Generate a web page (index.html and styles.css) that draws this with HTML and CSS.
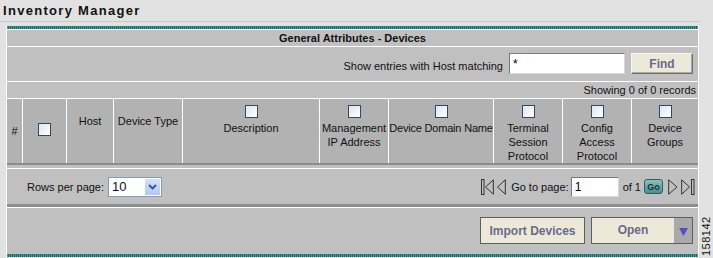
FILE: index.html
```html
<!DOCTYPE html>
<html lang="en">
<head>
    <meta charset="UTF-8">
    <title>Inventory Manager</title>
    <link rel="stylesheet" href="styles.css">
</head>
<body>
    <div class="page-title">Inventory Manager</div>

    <div class="panel">
        <div class="strip"></div>
        <div class="caption">General Attributes - Devices</div>

        <!-- Filter -->
        <div class="filter-row">
            <span>Show entries with Host matching</span>
            <input type="text" class="text-input host-input" value="*">
            <button class="btn find-btn">Find</button>
        </div>
        <div class="count-row">Showing 0 of 0 records</div>

        <!-- Column headers -->
        <div class="grid-head">
            <div class="cell cell-mid">#</div>
            <div class="cell cell-mid"><span class="check"></span></div>
            <div class="cell cell-plain">Host</div>
            <div class="cell cell-plain">Device Type</div>
            <div class="cell"><span class="check"></span><span>Description</span></div>
            <div class="cell"><span class="check"></span><span>Management IP Address</span></div>
            <div class="cell cell-nowrap"><span class="check"></span><span>Device Domain Name</span></div>
            <div class="cell"><span class="check"></span><span>Terminal Session Protocol</span></div>
            <div class="cell"><span class="check"></span><span>Config Access Protocol</span></div>
            <div class="cell"><span class="check"></span><span>Device Groups</span></div>
        </div>
        <div class="gap-row"></div>

        <!-- Paging -->
        <div class="paging-row">
            <div class="rows-per-page">
                <span>Rows per page:</span>
                <div class="select">
                    <span class="select-value">10</span>
                    <span class="select-arrow">
                        <svg width="9" height="6" viewBox="0 0 9 6"><path d="M1 1 L4.5 4.5 L8 1" fill="none" stroke="#3b4f8c" stroke-width="1.8"/></svg>
                    </span>
                </div>
            </div>
            <div class="pager">
                <svg class="pager-icon first" width="13" height="16" viewBox="0 0 13 16"><rect x="0.5" y="0.5" width="2.5" height="15" fill="none" stroke="#333"/><path d="M12.3 0.8 L4.5 8 L12.3 15.2 Z" fill="none" stroke="#333"/></svg>
                <svg class="pager-icon prev" width="10" height="16" viewBox="0 0 10 16"><path d="M9.3 0.8 L1.5 8 L9.3 15.2 Z" fill="none" stroke="#333"/></svg>
                <span class="pager-label">Go to page:</span>
                <input type="text" class="text-input page-input" value="1">
                <span class="pager-total">of 1</span>
                <button class="go-btn">Go</button>
                <svg class="pager-icon next" width="11" height="16" viewBox="0 0 11 16"><path d="M0.7 0.8 L9 8 L0.7 15.2 Z" fill="none" stroke="#333"/></svg>
                <svg class="pager-icon last" width="14" height="16" viewBox="0 0 14 16"><path d="M0.7 0.8 L8.5 8 L0.7 15.2 Z" fill="none" stroke="#333"/><rect x="10.5" y="0.5" width="2.5" height="15" fill="none" stroke="#333"/></svg>
            </div>
        </div>

        <!-- Actions -->
        <div class="action-row">
            <button class="btn action-btn import-btn">Import Devices</button>
            <div class="btn action-btn open-btn">
                <span class="open-label">Open</span>
                <span class="open-arrow">
                    <svg width="9" height="8" viewBox="0 0 9 8"><path d="M0 0 H9 L4.5 8 Z" fill="#5050c8"/></svg>
                </span>
            </div>
        </div>
        <div class="strip"></div>
    </div>

    <div class="fig-number">158142</div>
</body>
</html>
```

FILE: styles.css
```css
* {
    box-sizing: border-box;
}
body {
    margin: 0;
    width: 713px;
    height: 258px;
    overflow: hidden;
    position: relative;
    background: #e2e2e2;
    font-family: "Liberation Sans", Arial, sans-serif;
    font-size: 11px;
    color: #111;
}
.page-title {
    width: 700px;
    height: 22px;
    padding: 3px 0 0 3px;
    font-size: 13px;
    font-weight: bold;
    letter-spacing: 1.3px;
    color: #111;
    border-bottom: 1px solid #c9c9c9;
}
.panel {
    width: 693px;
    margin: 4px 0 0 6px;
    border-left: 1px solid #fff;
    border-right: 1px solid #fff;
    background: #c0c0c0;
}
.strip {
    height: 3px;
    background: repeating-linear-gradient(90deg, #3f9b93 0 1px, #1c6a64 1px 2px);
}
.caption {
    height: 18px;
    border-top: 1px solid #fff;
    border-bottom: 1px solid #fff;
    text-align: center;
    font-weight: bold;
    line-height: 16px;
}
.filter-row {
    height: 35px;
    border-bottom: 1px solid #fff;
    display: flex;
    align-items: flex-start;
    justify-content: flex-end;
    padding: 6px 5px 0 0;
}
.filter-row span {
    margin: 7px 6px 0 0;
}
.text-input {
    font-family: "Liberation Sans", Arial, sans-serif;
    font-size: 12px;
    background: #fff;
    border: 1px solid #7a7a7a;
    border-right-color: #d8d8d8;
    border-bottom-color: #d8d8d8;
    padding: 0 3px;
    outline: none;
}
.host-input {
    width: 116px;
    height: 21px;
    line-height: 14px;
    vertical-align: top;
}
.btn {
    font-family: "Liberation Sans", Arial, sans-serif;
    font-weight: bold;
    font-size: 12px;
    color: #6a6a8c;
    background: #ece9d8;
    border: 1px solid #5e5e5e;
}
.find-btn {
    width: 62px;
    height: 21px;
    margin-left: 6px;
    border-color: #f4f4f4 #6e6e6e #6e6e6e #f4f4f4;
    box-shadow: inset -1px -1px 0 #a8a8a8;
}
.count-row {
    height: 17px;
    border-bottom: 1px solid #fff;
    text-align: right;
    padding-right: 2px;
    line-height: 16px;
}
.grid-head {
    display: grid;
    grid-template-columns: 15px 43px 46px 68px 136px 68px 104px 68px 68px 1fr;
    column-gap: 1px;
    background: #fff;
    border-bottom: 2px solid #8c8c8c;
}
.cell {
    height: 64px;
    background: #b2b2b2;
    display: flex;
    flex-direction: column;
    align-items: center;
    padding-top: 6px;
    text-align: center;
    line-height: 14px;
}
.cell .check {
    margin-bottom: 3px;
}
.cell-mid {
    justify-content: center;
    padding-top: 0;
}
.cell-plain {
    padding-top: 15px;
}
.cell-nowrap {
    white-space: nowrap;
    letter-spacing: -0.2px;
}
.check {
    display: block;
    width: 13px;
    height: 13px;
    border: 1px solid #2e4a66;
    background: linear-gradient(135deg, #dfe6ef, #ffffff);
}
.gap-row {
    height: 4px;
    border-bottom: 1px solid #fff;
}
.paging-row {
    height: 38px;
    border-bottom: 3px solid #8e8e8e;
    display: flex;
    align-items: center;
    justify-content: space-between;
    padding: 0 3px 0 20px;
}
.rows-per-page {
    display: flex;
    align-items: center;
}
.select {
    display: flex;
    width: 54px;
    height: 20px;
    margin-left: 4px;
    background: #fff;
    border: 1px solid #7f9db9;
}
.select-value {
    flex: 1;
    font-size: 13px;
    line-height: 18px;
    padding-left: 3px;
}
.select-arrow {
    width: 17px;
    display: flex;
    align-items: center;
    justify-content: center;
    background: linear-gradient(180deg, #d4e0fb, #b3c7f3);
    border: 1px solid #fff;
}
.pager {
    display: flex;
    align-items: center;
}
.pager-icon.first {
    margin-right: 2px;
}
.pager-icon.prev {
    margin-right: 5px;
}
.pager-icon.next {
    margin-right: 2px;
}
.pager-label {
    margin-right: 2px;
}
.page-input {
    width: 48px;
    height: 20px;
    margin-right: 4px;
}
.pager-total {
    margin-right: 3px;
}
.go-btn {
    width: 19px;
    height: 15px;
    margin-right: 5px;
    padding: 0;
    font-family: "Liberation Sans", Arial, sans-serif;
    font-size: 9px;
    font-weight: bold;
    color: #123344;
    background: linear-gradient(180deg, #8fc0c0, #4f8c8c);
    border: 1px solid #2f5e5e;
    border-radius: 3px;
}
.action-row {
    height: 47px;
    border-top: 1px solid #fff;
    display: flex;
    justify-content: flex-end;
    align-items: flex-start;
    padding: 9px 5px 0 0;
}
.action-btn {
    height: 27px;
}
.import-btn {
    width: 105px;
    margin-right: 6px;
}
.open-btn {
    width: 102px;
    display: flex;
}
.open-label {
    flex: 1;
    text-align: center;
    line-height: 25px;
}
.open-arrow {
    width: 18px;
    display: flex;
    align-items: center;
    justify-content: center;
    padding-top: 3px;
    background: #a9a9a9;
}
.fig-number {
    position: absolute;
    left: 701px;
    top: 256px;
    width: 50px;
    font-size: 11px;
    letter-spacing: 0.5px;
    line-height: 11px;
    color: #111;
    transform: rotate(-90deg);
    transform-origin: 0 0;
}
```
